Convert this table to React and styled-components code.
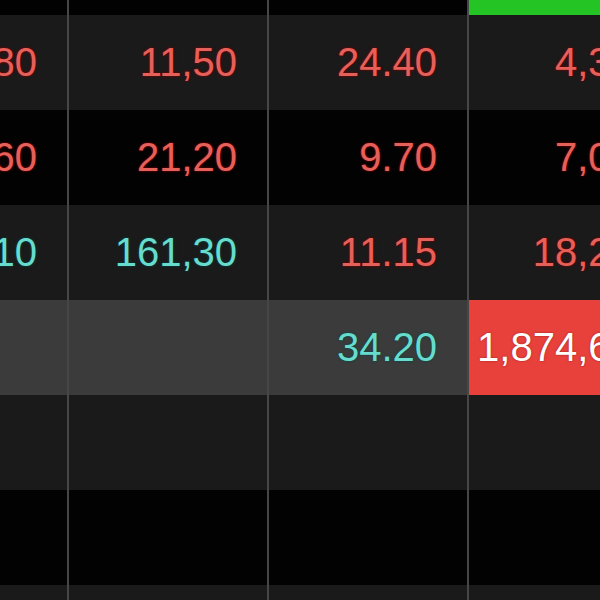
import React from "react";
import styled, { createGlobalStyle } from "styled-components";

const Global = createGlobalStyle`
  html, body { margin: 0; padding: 0; background: #000; overflow: hidden; }
  #root { width: 600px; height: 600px; }
`;

const Viewport = styled.div`
  width: 600px;
  height: 600px;
  overflow: hidden;
  background: #000;
`;

const Table = styled.div`
  display: flex;
  flex-direction: column;
  width: 820px;
  margin-left: -131px;
  margin-top: -80px;
`;

const rowBg = { dark: "#1a1a1a", black: "#020202", gray: "#3b3b3b" };

const Row = styled.div`
  display: grid;
  grid-template-columns: 200px 200px 200px 218px;
  height: 95px;
  background: ${(p) => rowBg[p.$tone]};
`;

const textColor = { red: "#e6605a", cyan: "#68dccc", white: "#ffffff" };
const glow = {
  red: "0 0 3px rgba(120, 0, 0, 1), 0 0 1px rgba(140, 20, 20, 0.8)",
  cyan: "0 0 3px rgba(0, 70, 70, 1)",
  white: "0 0 2px rgba(110, 20, 20, 0.7)",
};
const fillBg = { red: "#e8403a", green: "#24c424" };

const Cell = styled.div`
  box-sizing: border-box;
  display: flex;
  align-items: center;
  justify-content: flex-end;
  padding-right: 30px;
  border-right: 2px solid #464646;
  white-space: nowrap;
  overflow: hidden;
  font-family: "Liberation Sans", Arial, sans-serif;
  font-size: 40px;
  color: ${(p) => textColor[p.$tone || "red"]};
  text-shadow: ${(p) => glow[p.$tone || "red"]};
  background: ${(p) => (p.$fill ? fillBg[p.$fill] : "transparent")};
`;

const rows = [
  { tone: "black", cells: [{}, {}, {}, { fill: "green" }] },
  {
    tone: "dark",
    cells: [
      { v: "12,80", t: "red" },
      { v: "11,50", t: "red" },
      { v: "24.40", t: "red" },
      { v: "4,300", t: "red" },
    ],
  },
  {
    tone: "black",
    cells: [
      { v: "14,60", t: "red" },
      { v: "21,20", t: "red" },
      { v: "9.70", t: "red" },
      { v: "7,000", t: "red" },
    ],
  },
  {
    tone: "dark",
    cells: [
      { v: "131,10", t: "cyan" },
      { v: "161,30", t: "cyan" },
      { v: "11.15", t: "red" },
      { v: "18,200", t: "red" },
    ],
  },
  {
    tone: "gray",
    cells: [{}, {}, { v: "34.20", t: "cyan" }, { v: "1,874,600", t: "white", fill: "red" }],
  },
  { tone: "dark", cells: [{}, {}, {}, {}] },
  { tone: "black", cells: [{}, {}, {}, {}] },
  { tone: "dark", cells: [{}, {}, {}, {}] },
];

export default function App() {
  return (
    <Viewport>
      <Global />
      <Table>
        {rows.map((r, i) => (
          <Row key={i} $tone={r.tone}>
            {r.cells.map((c, j) => (
              <Cell key={j} $tone={c.t} $fill={c.fill}>
                {c.v}
              </Cell>
            ))}
          </Row>
        ))}
      </Table>
    </Viewport>
  );
}
